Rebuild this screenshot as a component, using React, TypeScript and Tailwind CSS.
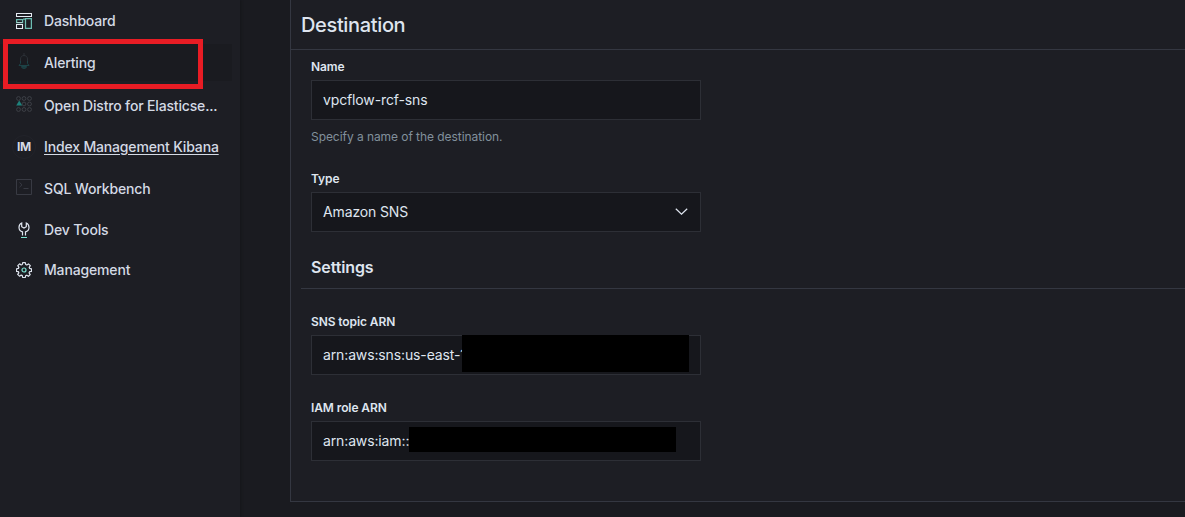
import type { ReactNode } from "react";

function DashboardIcon() {
  return (
    <svg width="16" height="16" viewBox="0 0 16 16" fill="none">
      <path stroke="#6cbcb1" strokeWidth="1.25" d="M.6 6.500h6v3h-6zM9.500 5.600h5.900v9.800H9.500zM7 6h2" />
      <path stroke="#e6ebf3" strokeWidth="1.1" d="M.5.5h15v3H.5zM.5 11.500h6v4h-6z" />
      <path stroke="#a9cfcb" d="M.5 9.500h6" />
    </svg>
  );
}

function BellIcon() {
  return (
    <svg className="mb-[3px]" width="16" height="16" viewBox="0 0 16 16" fill="none">
      <path stroke="#2c3137" d="M8 0v2.500M4.500 10V6C4.500 4 6 2.500 8 2.500s3.500 1.500 3.500 3.500v4" />
      <path stroke="#1d4246" d="M4.500 8v2.500L3 12.500h10l-1.500-2V8" />
      <path stroke="#1d4246" fill="#1c393d" d="M5.500 13.500h5a2.500 2 0 0 1-5 0z" />
    </svg>
  );
}

function DistroIcon() {
  const dots = [
    [2.5, 2.5], [8, 2.5], [13.5, 2.5],
    [8, 8], [13.5, 8],
    [2.5, 13.5], [8, 13.5], [13.5, 13.5],
  ];
  return (
    <svg width="16" height="16" viewBox="0 0 16 16" fill="none">
      {dots.map(([x, y]) => (
        <circle key={`${x}-${y}`} cx={x} cy={y} r="1.9" stroke="#3d4047" />
      ))}
      <path fill="#1f827c" d="M3.200 4.500 6.200 9.500H.2z" />
    </svg>
  );
}

function ConsoleIcon() {
  return (
    <svg width="16" height="16" viewBox="0 0 16 16" fill="none" stroke="#383a43">
      <path d="M.5.5h15v15H.5zM3.500 3.500l2.500 2.300-2.500 2.400M7.500 9.500h5" />
    </svg>
  );
}

function WrenchIcon() {
  return (
    <svg width="16" height="16" viewBox="0 0 16 16" fill="none" strokeWidth="1.2">
      <path
        stroke="#dfe5ef"
        d="M6.500 13.500V9.800A4.700 4.700 0 0 1 3 5.400C3 3.500 4 1.800 5.700 1v3.700L8 6l2.300-1.300V1C12 1.800 13 3.500 13 5.400a4.700 4.700 0 0 1-3.500 4.400v3.700"
      />
      <path stroke="#7de2d1" strokeWidth="1" d="M5 15.500h6" />
    </svg>
  );
}

function GearIcon() {
  return (
    <svg width="16" height="16" viewBox="0 0 16 16" fill="none" strokeWidth="1.2">
      <path
        stroke="#dfe5ef"
        strokeLinejoin="round"
        d="M6.700.6h2.600l.4 1.900 1.100.5 1.700-1.100 1.800 1.800L13.200 5.300l.4 1.100 1.900.4v2.500l-1.900.4-.5 1.100 1.100 1.700-1.800 1.800-1.600-1.100-1.100.4-.4 1.900H6.700l-.4-1.900-1.100-.5-1.700 1.100-1.800-1.800 1.100-1.600-.4-1.100-1.900-.4V6.800l1.900-.4.5-1.100-1.100-1.700 1.800-1.800 1.600 1.100 1.100-.4z"
      />
      <circle cx="8" cy="8" r="2" stroke="#7de2d1" />
    </svg>
  );
}

function NavItem({
  icon,
  label,
  className,
  underlined = false,
}: {
  icon: ReactNode;
  label: string;
  className: string;
  underlined?: boolean;
}) {
  return (
    <li className={`flex items-center pl-3 ${className}`}>
      <span className="flex size-6 shrink-0 items-center justify-center">{icon}</span>
      <span className={`ml-2 whitespace-nowrap ${underlined ? "underline underline-offset-2" : ""}`}>{label}</span>
    </li>
  );
}

function Field({ label, children, className = "" }: { label: string; children: ReactNode; className?: string }) {
  return (
    <div className={className}>
      <div className="mb-1 h-[18px] text-xs leading-[18px] font-semibold tracking-[-0.1px] text-[#dfe5ef]">{label}</div>
      {children}
    </div>
  );
}

function InputBox({ children }: { children: ReactNode }) {
  return (
    <div className="relative flex h-10 w-[390px] items-center border border-[#2d2f36] bg-[#16171c] px-[11px] text-sm tracking-[-0.13px] text-[#dfe5ef]">
      {children}
    </div>
  );
}

export default function App() {
  return (
    <div className="flex h-[517px] w-[1185px] overflow-hidden bg-[#1a1b20] font-['Inter',sans-serif]">
      <nav className="relative w-60 shrink-0 bg-[#1d1e24] shadow-[1px_0_2px_#15161a]">
        <ul className="text-sm font-medium tracking-[-0.16px] text-[#d4dae5]">
          <NavItem className="h-[42px]" icon={<DashboardIcon />} label="Dashboard" />
          <NavItem className="mt-[2px] mr-2 mb-[3px] h-[37px] bg-[#1a1b20]" icon={<BellIcon />} label="Alerting" />
          <NavItem
            className="h-[43px]"
            icon={<span className="mb-[3px]"><DistroIcon /></span>}
            label="Open Distro for Elasticse..."
          />
          <NavItem
            className="h-10"
            underlined
            icon={
              <span className="inline-flex size-6 items-center justify-center rounded-full border border-[#22232a] text-xs font-bold">
                IM
              </span>
            }
            label="Index Management Kibana"
          />
          <NavItem
            className="h-[43px]"
            icon={<span className="mb-[3px]"><ConsoleIcon /></span>}
            label="SQL Workbench"
          />
          <NavItem className="h-10" icon={<WrenchIcon />} label="Dev Tools" />
          <NavItem className="h-10" icon={<GearIcon />} label="Management" />
        </ul>
        <div className="absolute top-[39px] left-[3px] h-[50px] w-[200px] border-5 border-[#e81c24]" />
      </nav>

      <main className="ml-[50px] h-[502px] flex-1 border-b border-l border-[#343741] bg-[#1d1e24]">
        <h1 className="h-[50px] border-b border-[#343741] pl-[10px] text-xl leading-[50px] font-[450] tracking-[-0.35px] text-[#dfe5ef]">
          Destination
        </h1>
        <div className="pl-5">
          <Field label="Name" className="pt-2">
            <InputBox>vpcflow-rcf-sns</InputBox>
            <p className="mt-2 h-[18px] text-xs leading-[18px] tracking-[-0.06px] text-[#81909c]">
              Specify a name of the destination.
            </p>
          </Field>
          <Field label="Type" className="mt-6">
            <InputBox>
              <span className="flex-1">Amazon SNS</span>
              <svg className="mr-[1.5px] mb-px" width="13" height="7" viewBox="0 0 13 7" fill="none" stroke="#dfe5ef" strokeWidth="1.2">
                <path d="M.8.8l5.700 5.400L12.200.8" />
              </svg>
            </InputBox>
          </Field>
        </div>
        <h2 className="mt-[23px] ml-[10px] h-[34px] border-b border-[#343741] pl-[10px] text-base leading-6 font-semibold tracking-[-0.12px] text-[#dfe5ef]">
          Settings
        </h2>
        <div className="pl-5">
          <Field label="SNS topic ARN" className="mt-6">
            <InputBox>
              arn:aws:sns:us-east-1
              <span className="absolute -top-px left-[150px] h-[37px] w-[227px] bg-black" />
            </InputBox>
          </Field>
          <Field label="IAM role ARN" className="mt-6">
            <InputBox>
              arn:aws:iam::
              <span className="absolute top-[5px] left-[97px] h-[25px] w-[267px] bg-black" />
            </InputBox>
          </Field>
        </div>
      </main>
    </div>
  );
}
